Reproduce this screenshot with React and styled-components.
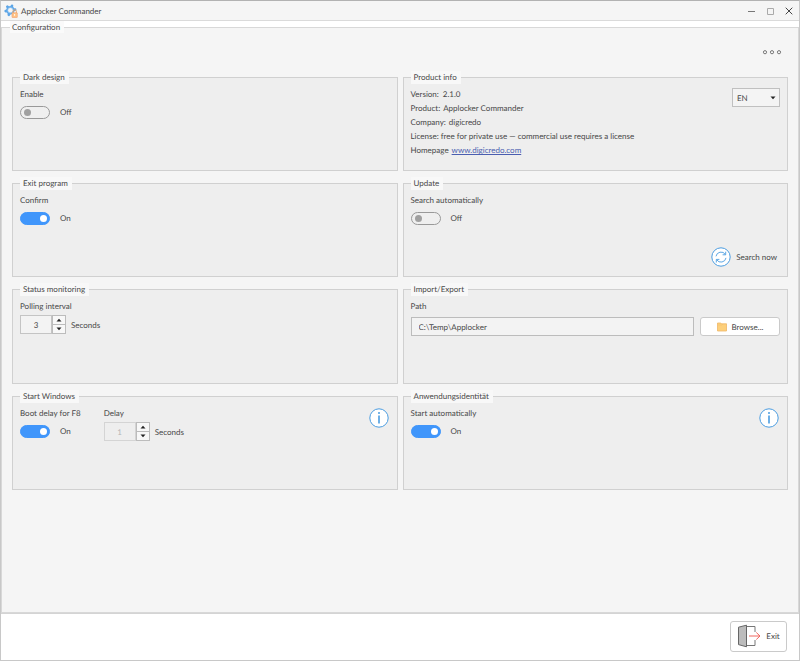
import React, { useState } from "react";
import styled, { createGlobalStyle } from "styled-components";

const GlobalStyle = createGlobalStyle`
  *, *::before, *::after { box-sizing: border-box; }
  html, body { margin: 0; }
  body, button, input, select {
    font-family: Lato, "Open Sans", sans-serif;
    font-size: 8px;
    line-height: 14px;
    color: #484848;
    text-rendering: geometricPrecision;
  }
`;

const Window = styled.div`
  display: flex;
  flex-direction: column;
  min-height: 100vh;
  background: #fff;
  border: 1px solid #c8c8c8;
  border-top-color: #b2b2b2;
`;

const TitleBar = styled.header`
  display: flex;
  align-items: center;
  height: 20px;
  padding: 0 5px 0 3px;
  background: #f5f5f5;
  border-bottom: 1px solid #dadada;
`;

const Title = styled.h1`
  flex: 1;
  margin: 0 0 0 3px;
  font-size: 8px;
  font-weight: 400;
`;

const WindowControls = styled.div`
  display: flex;
  gap: 9px;
`;

const IconButton = styled.button`
  display: flex;
  align-items: center;
  justify-content: center;
  padding: 0;
  border: 0;
  background: none;
  cursor: pointer;
`;

const Main = styled.fieldset`
  flex: 1;
  min-width: 0;
  margin: 0;
  padding: 0 10px 24px;
  border: 1px solid #d8d8d8;
  background: #f5f5f5;
`;

const MainLegend = styled.legend`
  padding: 0 4px 0 2px;
  margin-left: -2px;
  line-height: 12px;
  background: #fafafa;
`;

const Toolbar = styled.div`
  display: flex;
  align-items: center;
  justify-content: flex-end;
  height: 38px;
  padding-right: 6px;
`;

const Groups = styled.div`
  display: grid;
  grid-template-columns: 1fr 1fr;
  grid-template-rows: 100px 100px 101px 100px;
  gap: 6px 5px;
`;

const GroupBox = styled.fieldset`
  display: flex;
  min-width: 0;
  margin: 0;
  padding: 3px 7px 9px;
  border: 1px solid #d0d0d0;
  background: #eeeeee;
`;

const GroupLegend = styled.legend`
  padding: 0 4px 0 3px;
  line-height: 13px;
  background: #f8f8f8;
`;

const Fields = styled.div`
  display: flex;
  flex: 1;
  gap: 23px;
  min-width: 0;
`;

const Field = styled.div`
  display: flex;
  flex-direction: column;
  gap: ${(p) => p.$gap || 4}px;
  flex: ${(p) => (p.$grow ? "1" : "none")};
  min-width: 0;
`;

const Row = styled.div`
  display: flex;
  align-items: center;
  gap: ${(p) => p.$gap}px;
`;

const Switch = styled.input`
  appearance: none;
  display: flex;
  align-items: center;
  width: 30px;
  height: 13px;
  margin: 0;
  padding: 0 3px;
  border: 1px solid #999;
  border-radius: 7px;
  background: #efefef;
  cursor: pointer;

  &::before {
    content: "";
    width: 7px;
    height: 7px;
    border-radius: 50%;
    background: #a0a0a0;
  }

  &:checked {
    justify-content: flex-end;
    padding: 0 2px;
    border-color: #4096fb;
    background: #4096fb;
  }

  &:checked::before {
    background: #fff;
  }
`;

const Spinner = styled.div`
  display: flex;
`;

const NumberInput = styled.input`
  width: 32px;
  height: 19px;
  padding: 0;
  border: 1px solid #c4c4c4;
  background: #f3f3f3;
  text-align: center;
  appearance: textfield;

  &::-webkit-inner-spin-button {
    appearance: none;
    margin: 0;
  }

  &:disabled {
    border-color: #d4d4d4;
    background: #eeeeee;
    color: #b4b4b4;
  }
`;

const SpinButtons = styled.div`
  display: flex;
  flex-direction: column;
`;

const SpinButton = styled.button`
  display: flex;
  align-items: center;
  justify-content: center;
  width: 14px;
  height: 10px;
  padding: 0;
  border: 1px solid #bcbcbc;
  background: #f8f8f8;

  & + & {
    margin-top: -1px;
  }
`;

const InfoButton = styled(IconButton)`
  align-self: flex-start;
  margin: 2px 1px 0 0;
  border-radius: 50%;
`;

const InfoList = styled.dl`
  flex: 1;
  margin: 0;
`;

const InfoRow = styled.div`
  display: flex;
  gap: ${(p) => p.$gap}px;
`;

const Term = styled.dt`
  white-space: nowrap;
`;

const Detail = styled.dd`
  margin: 0;
`;

const Link = styled.a`
  color: #4a5eb0;
`;

const SelectWrap = styled.div`
  position: relative;
  align-self: flex-start;
  margin-top: 1px;

  svg {
    position: absolute;
    right: 4px;
    top: 8px;
    pointer-events: none;
  }
`;

const Select = styled.select`
  appearance: none;
  width: 48px;
  height: 19px;
  padding: 0 4px;
  border: 1px solid #c0c0c0;
  border-radius: 0;
  background: #f4f4f4;
`;

const SearchButton = styled(IconButton)`
  align-self: flex-end;
  gap: 5px;
  margin-right: 3px;
`;

const PathInput = styled.input`
  flex: 1;
  min-width: 0;
  height: 19px;
  padding: 0 7px;
  border: 1px solid #bcbcbc;
  background: #f3f3f3;
`;

const PushButton = styled.button`
  display: flex;
  align-items: center;
  justify-content: center;
  gap: 5px;
  width: ${(p) => p.$width}px;
  height: ${(p) => p.$height}px;
  padding: 0;
  border: 1px solid #cacaca;
  border-radius: 3px;
  background: #fff;
`;

const Footer = styled.footer`
  display: flex;
  align-items: center;
  justify-content: flex-end;
  height: 47px;
  padding: 0 12px 2px 0;
  border-top: 1px solid #d4d4d4;
`;

const AppIcon = () => (
  <svg width="14" height="14" viewBox="0 0 14 14" aria-hidden="true">
    <g stroke="#5ba4e6" strokeWidth="2.6" strokeLinecap="round">
      {[0, 60, 120].map((a) => (
        <path key={a} d="M6.4 1.5V11.1" transform={`rotate(${a + 20} 6.4 6.3)`} />
      ))}
    </g>
    <circle cx="6.4" cy="6.3" r="3.8" fill="#84bff2" stroke="#5ba4e6" />
    <circle cx="6.4" cy="6.3" r="2.3" fill="#f5f5f5" />
    <path d="M9 9V7.5a1.7 1.7 0 0 1 3.4 0V9" fill="none" stroke="#eba56a" />
    <rect x="8" y="8.7" width="5.3" height="4.8" rx=".5" fill="#ffc285" stroke="#f0a070" strokeWidth=".6" />
    <path d="M10.6 10v1.8" stroke="#fff" strokeWidth=".9" />
  </svg>
);

const ControlIcon = ({ d, color }) => (
  <svg width="10" height="10" viewBox="0 0 10 10" aria-hidden="true">
    <path d={d} fill="none" stroke={color} strokeWidth="1" />
  </svg>
);

const DotsIcon = () => (
  <svg width="20" height="8" viewBox="0 0 20 8" fill="none" stroke="#777" aria-hidden="true">
    <circle cx="3" cy="4.2" r="1.6" />
    <circle cx="10" cy="4.2" r="1.6" />
    <circle cx="17" cy="4.2" r="1.6" />
  </svg>
);

const InfoIcon = () => (
  <svg width="20" height="20" viewBox="0 0 20 20" aria-hidden="true">
    <circle cx="10" cy="10" r="9.2" fill="#fff" stroke="#4a9ce0" />
    <circle cx="10" cy="5.1" r="1" fill="#4a9ce0" />
    <path d="M10 7.4V15.6" stroke="#4a9ce0" strokeWidth="1.6" />
  </svg>
);

const RefreshIcon = () => (
  <svg width="20" height="20" viewBox="0 0 20 20" fill="none" stroke="#4a9ce0" aria-hidden="true">
    <circle cx="10" cy="10" r="9.2" fill="#fff" />
    <g strokeWidth=".9">
      <path d="M5 9.3A5.1 5.1 0 0 1 14.3 7.4M14.7 4.7V7.8H11.6" />
      <path d="M15 10.9A5.1 5.1 0 0 1 5.7 12.8M5.3 15.5V12.4H8.4" />
    </g>
  </svg>
);

const FolderIcon = () => (
  <svg width="10" height="10" viewBox="0 0 10 10" aria-hidden="true">
    <path d="M.5 9V1h3.3l.8.8h4.9V9z" fill="#fdd07c" stroke="#efb868" strokeWidth=".8" />
    <path d="M1 3h4l1-1" fill="none" stroke="#f3bd6b" strokeWidth=".5" />
  </svg>
);

const ExitIcon = () => (
  <svg width="24" height="24" viewBox="0 0 24 24" fill="none" aria-hidden="true">
    <path d="M10 2.5H18V8M18 16V21.5H10" stroke="#777" />
    <path d="M1.5 3.2L9.5 1.2V22.8L1.5 20.6z" fill="#bcbcbc" stroke="#666" />
    <path d="M12 12H23M19.3 8.5L23 12L19.3 15.5" stroke="#f0665f" />
  </svg>
);

const Arrow = ({ up }) => (
  <svg width="6" height="4" viewBox="0 0 6 4" aria-hidden="true">
    <path d={up ? "M.5 3.5L3 .7L5.5 3.5z" : "M.5 .5L3 3.3L5.5 .5z"} fill="#222" />
  </svg>
);

function Group({ title, children }) {
  return (
    <GroupBox>
      <GroupLegend>{title}</GroupLegend>
      {children}
    </GroupBox>
  );
}

function SwitchField({ id, label, initial }) {
  const [on, setOn] = useState(initial);
  return (
    <Field>
      <label htmlFor={id}>{label}</label>
      <Row $gap={10}>
        <Switch id={id} type="checkbox" role="switch" checked={on} onChange={() => setOn(!on)} />
        <span>{on ? "On" : "Off"}</span>
      </Row>
    </Field>
  );
}

function SecondsField({ id, label, initial, disabled }) {
  const [value, setValue] = useState(initial);
  return (
    <Field $gap={2}>
      <label htmlFor={id}>{label}</label>
      <Row $gap={5}>
        <Spinner>
          <NumberInput
            id={id}
            type="number"
            value={value}
            disabled={disabled}
            onChange={(e) => setValue(Number(e.target.value))}
          />
          <SpinButtons>
            <SpinButton type="button" aria-label={`Increase ${label}`} disabled={disabled} onClick={() => setValue(value + 1)}>
              <Arrow up />
            </SpinButton>
            <SpinButton type="button" aria-label={`Decrease ${label}`} disabled={disabled} onClick={() => setValue(value - 1)}>
              <Arrow />
            </SpinButton>
          </SpinButtons>
        </Spinner>
        <span>Seconds</span>
      </Row>
    </Field>
  );
}

const productInfo = [
  ["Version:", "2.1.0", 4],
  ["Product:", "Applocker Commander", 3],
  ["Company:", "digicredo", 3],
  ["License:", "free for private use — commercial use requires a license", 2],
];

export default function App() {
  const [path, setPath] = useState("C:\\Temp\\Applocker");
  return (
    <>
      <GlobalStyle />
      <Window>
        <TitleBar>
          <AppIcon />
          <Title>Applocker Commander</Title>
          <WindowControls>
            <IconButton type="button" aria-label="Minimize">
              <ControlIcon d="M2 5.5H9" color="#777" />
            </IconButton>
            <IconButton type="button" aria-label="Maximize">
              <ControlIcon d="M2.5 2.5H8.5V8.5H2.5z" color="#aaa" />
            </IconButton>
            <IconButton type="button" aria-label="Close">
              <ControlIcon d="M1.7 1.7L8.3 8.3M8.3 1.7L1.7 8.3" color="#444" />
            </IconButton>
          </WindowControls>
        </TitleBar>

        <Main>
          <MainLegend>Configuration</MainLegend>
          <Toolbar>
            <IconButton type="button" aria-label="More">
              <DotsIcon />
            </IconButton>
          </Toolbar>
          <Groups>
            <Group title="Dark design">
              <SwitchField id="dark" label="Enable" initial={false} />
            </Group>

            <Group title="Product info">
              <InfoList>
                {productInfo.map(([term, detail, gap]) => (
                  <InfoRow key={term} $gap={gap}>
                    <Term>{term}</Term>
                    <Detail>{detail}</Detail>
                  </InfoRow>
                ))}
                <InfoRow $gap={3}>
                  <Term>Homepage</Term>
                  <Detail>
                    <Link href="#homepage">www.digicredo.com</Link>
                  </Detail>
                </InfoRow>
              </InfoList>
              <SelectWrap>
                <Select aria-label="Language" defaultValue="EN">
                  <option>EN</option>
                  <option>DE</option>
                </Select>
                <Arrow />
              </SelectWrap>
            </Group>

            <Group title="Exit program">
              <SwitchField id="confirm" label="Confirm" initial />
            </Group>

            <Group title="Update">
              <Fields>
                <SwitchField id="update" label="Search automatically" initial={false} />
              </Fields>
              <SearchButton type="button">
                <RefreshIcon />
                Search now
              </SearchButton>
            </Group>

            <Group title="Status monitoring">
              <SecondsField id="polling" label="Polling interval" initial={3} />
            </Group>

            <Group title="Import/Export">
              <Field $grow>
                <label htmlFor="path">Path</label>
                <Row $gap={6}>
                  <PathInput id="path" type="text" value={path} onChange={(e) => setPath(e.target.value)} />
                  <PushButton type="button" $width={80} $height={19}>
                    <FolderIcon />
                    Browse...
                  </PushButton>
                </Row>
              </Field>
            </Group>

            <Group title="Start Windows">
              <Fields>
                <SwitchField id="boot" label="Boot delay for F8" initial />
                <SecondsField id="delay" label="Delay" initial={1} disabled />
              </Fields>
              <InfoButton type="button" aria-label="About the boot delay">
                <InfoIcon />
              </InfoButton>
            </Group>

            <Group title="Anwendungsidentität">
              <Fields>
                <SwitchField id="identity" label="Start automatically" initial />
              </Fields>
              <InfoButton type="button" aria-label="About the identity service">
                <InfoIcon />
              </InfoButton>
            </Group>
          </Groups>
        </Main>

        <Footer>
          <PushButton type="button" $width={57} $height={31}>
            <ExitIcon />
            Exit
          </PushButton>
        </Footer>
      </Window>
    </>
  );
}
